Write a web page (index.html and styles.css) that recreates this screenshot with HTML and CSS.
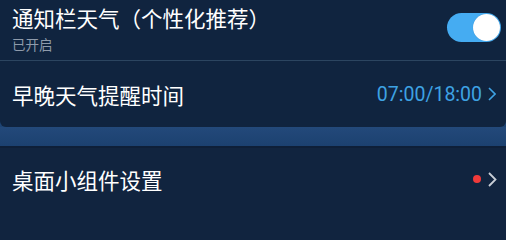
FILE: index.html
```html
<!DOCTYPE html>
<html lang="zh-CN">
<head>
<meta charset="utf-8">
<link rel="stylesheet" href="styles.css">
</head>
<body>
<div class="page">
  <section class="card card-top">
    <div class="row row-switch">
      <div class="texts">
        <div class="title">通知栏天气（个性化推荐）</div>
        <div class="sub">已开启</div>
      </div>
      <div class="toggle"><span class="knob"></span></div>
    </div>
    <div class="sep"></div>
    <div class="row row-time">
      <div class="title">早晚天气提醒时间</div>
      <div class="value">
        <span class="time">07:00/18:00</span>
        <svg class="chev chev-blue" viewBox="0 0 8 14" width="8" height="14"><path d="M1 1 L7 7 L1 13" fill="none" stroke="currentColor" stroke-width="1.6"/></svg>
      </div>
    </div>
  </section>
  <div class="band"></div>
  <section class="card card-bottom">
    <div class="row row-widget">
      <div class="title">桌面小组件设置</div>
      <div class="value">
        <span class="dot"></span>
        <svg class="chev chev-gray" viewBox="0 0 9 15" width="9" height="15"><path d="M1 1 L7.5 7.5 L1 14" fill="none" stroke="currentColor" stroke-width="1.8"/></svg>
      </div>
    </div>
  </section>
</div>
</body>
</html>
```

FILE: styles.css
```css
html, body {
  margin: 0;
  padding: 0;
  background: #11243f;
}
body {
  width: 506px;
  height: 203px;
  overflow: hidden;
  font-family: "Noto Sans CJK SC", "Noto Sans", sans-serif;
  color: #ffffff;
}
.page {
  display: flex;
  flex-direction: column;
  background: #1d4372;
}
.card {
  background: #10243f;
}
.card-top {
  border-radius: 0 0 6px 6px;
  height: 127px;
  display: flex;
  flex-direction: column;
}
.band {
  height: 19px;
  background: linear-gradient(#23497a, #1c4170);
}
.card-bottom {
  border-top: 2px solid #0e1f38;
  height: 60px;
  background: #11243f;
}
.row {
  display: flex;
  align-items: center;
  justify-content: space-between;
  padding: 0 5px 0 12px;
}
.row-switch {
  height: 60px;
  align-items: flex-start;
}
.texts {
  display: flex;
  flex-direction: column;
  padding-top: 2px;
}
.title {
  font-size: 21.5px;
  line-height: 31px;
  color: #ffffff;
}
.sub {
  font-size: 13.5px;
  line-height: 20px;
  margin-top: 1px;
  color: #8f9bab;
}
.toggle {
  margin-top: 13px;
  width: 54px;
  height: 29px;
  border-radius: 15px;
  background: #45acf2;
  display: flex;
  align-items: center;
  justify-content: flex-end;
  padding-right: 1px;
  box-sizing: border-box;
}
.knob {
  width: 27px;
  height: 27px;
  border-radius: 50%;
  background: #ffffff;
  box-shadow: 0 0 1px rgba(0,0,0,0.2);
}
.sep {
  height: 1px;
  background: #2c4560;
}
.row-time {
  flex: 1;
  padding-right: 10px;
  padding-top: 0;
}
.value {
  display: flex;
  align-items: center;
}
.time {
  font-family: Roboto, "Noto Sans", sans-serif;
  font-size: 19.5px;
  color: #3ea2e3;
  margin-right: 6px;
}
.chev-blue {
  color: #3ea2e3;
}
.row-widget {
  height: 68px;
  margin-top: -3px;
  padding-right: 9px;
}
.dot {
  width: 8px;
  height: 8px;
  border-radius: 50%;
  background: #f03a3a;
  margin-right: 7px;
}
.chev-gray {
  color: #c9ced6;
}
```
